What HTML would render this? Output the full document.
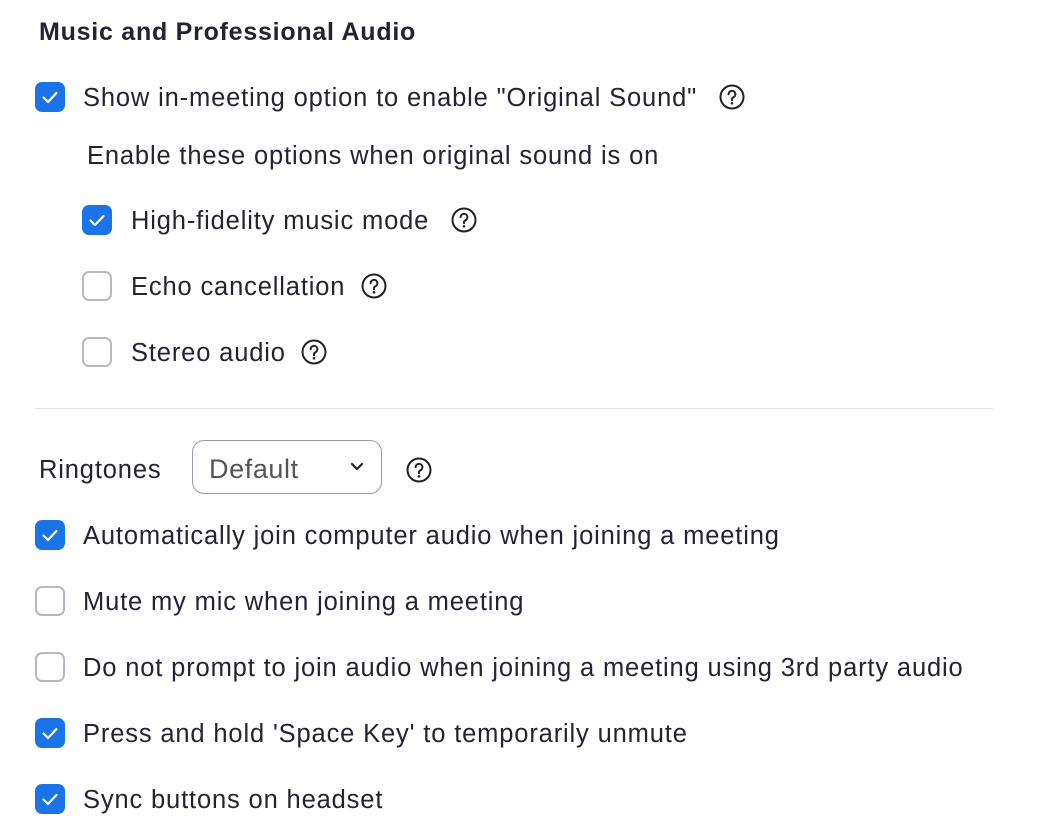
<!DOCTYPE html>
<html><head><style>
body{margin:0;width:1052px;height:840px;background:#fff;font-family:"Liberation Sans",sans-serif;color:#232333;position:relative;overflow:hidden}
.a{position:absolute;white-space:nowrap;font-size:25.5px;letter-spacing:0.85px;line-height:30px}
.cb{position:absolute;width:30px;height:30px;border-radius:7px;box-sizing:border-box}
.on{background:#1a73e8}
.off{border:2px solid #b8b8c0;background:#fff}
.q{position:absolute;width:26px;height:26px}
</style></head><body>
<div class="a" style="left:39px;top:17px;font-weight:bold;font-size:25px;letter-spacing:0.75px">Music and Professional Audio</div>

<svg width="0" height="0" style="position:absolute"><defs>
<symbol id="ck" viewBox="0 0 30 30"><path d="M8.5 15.5l4.5 4.5 8.5-9" fill="none" stroke="#fff" stroke-width="2.2" stroke-linecap="round" stroke-linejoin="round"/></symbol>
<symbol id="hq" viewBox="0 0 26 26"><circle cx="13" cy="13" r="11.5" fill="none" stroke="#222" stroke-width="2"/><path d="M9.6 10.2a3.4 3.4 0 1 1 4.6 3.2c-.9.4-1.2 1-1.2 1.9v.9" fill="none" stroke="#222" stroke-width="2" stroke-linecap="round"/><circle cx="13" cy="19.3" r="1.3" fill="#222"/></symbol>
</defs></svg>

<div class="cb on" style="left:35px;top:82px"><svg width="30" height="30"><use href="#ck"/></svg></div>
<div class="a" style="left:83px;top:83px">Show in-meeting option to enable "Original Sound"</div>
<svg class="q" style="left:719px;top:84px"><use href="#hq"/></svg>

<div class="a" style="left:87px;top:141px">Enable these options when original sound is on</div>

<div class="cb on" style="left:82px;top:205px"><svg width="30" height="30"><use href="#ck"/></svg></div>
<div class="a" style="left:131px;top:206px">High-fidelity music mode</div>
<svg class="q" style="left:451px;top:207px"><use href="#hq"/></svg>

<div class="cb off" style="left:82px;top:271px"></div>
<div class="a" style="left:131px;top:272px">Echo cancellation</div>
<svg class="q" style="left:361px;top:273px"><use href="#hq"/></svg>

<div class="cb off" style="left:82px;top:337px"></div>
<div class="a" style="left:131px;top:338px">Stereo audio</div>
<svg class="q" style="left:301px;top:339px"><use href="#hq"/></svg>

<div style="position:absolute;left:35px;top:408px;width:958px;height:1px;background:#e4e4e8"></div>

<div class="a" style="left:39px;top:455px">Ringtones</div>
<div style="position:absolute;left:192px;top:440px;width:190px;height:54px;box-sizing:border-box;border:1.5px solid #9a9aa2;border-radius:12px"></div>
<div class="a" style="left:209px;top:454px;color:#555;font-size:27px;letter-spacing:0.6px">Default</div>
<svg style="position:absolute;left:350px;top:462px" width="14" height="10"><path d="M2 2l5 5 5-5" fill="none" stroke="#222" stroke-width="2.2" stroke-linecap="round" stroke-linejoin="round"/></svg>
<svg class="q" style="left:406px;top:457px"><use href="#hq"/></svg>

<div class="cb on" style="left:35px;top:520px"><svg width="30" height="30"><use href="#ck"/></svg></div>
<div class="a" style="left:83px;top:521px">Automatically join computer audio when joining a meeting</div>

<div class="cb off" style="left:35px;top:586px"></div>
<div class="a" style="left:83px;top:587px">Mute my mic when joining a meeting</div>

<div class="cb off" style="left:35px;top:652px"></div>
<div class="a" style="left:83px;top:653px">Do not prompt to join audio when joining a meeting using 3rd party audio</div>

<div class="cb on" style="left:35px;top:718px"><svg width="30" height="30"><use href="#ck"/></svg></div>
<div class="a" style="left:83px;top:719px">Press and hold 'Space Key' to temporarily unmute</div>

<div class="cb on" style="left:35px;top:784px"><svg width="30" height="30"><use href="#ck"/></svg></div>
<div class="a" style="left:83px;top:785px">Sync buttons on headset</div>
</body></html>
